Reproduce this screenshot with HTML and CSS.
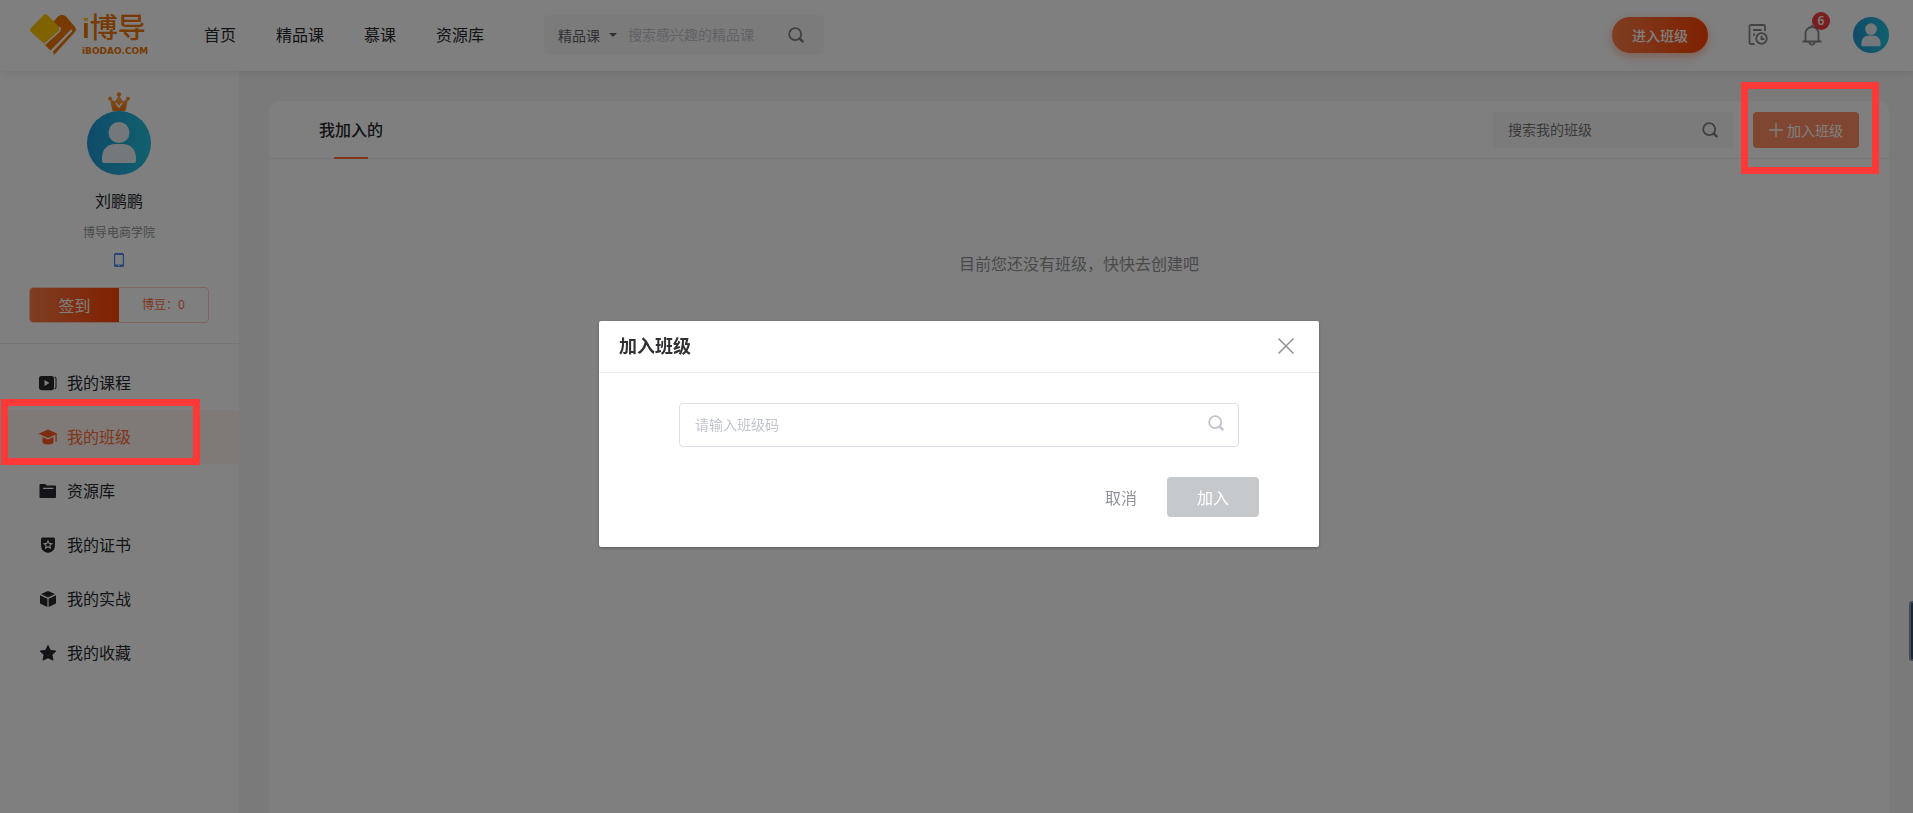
FILE: index.html
```html
<!DOCTYPE html>
<html lang="zh-CN">
<head>
    <meta charset="UTF-8">
    <meta name="viewport" content="width=device-width, initial-scale=1.0">
    <title>我的班级 - i博导</title>
    <link rel="stylesheet" href="styles.css">
</head>
<body>
    <svg class="sprite" aria-hidden="true">
        <symbol id="icon-search" viewBox="0 0 16 16">
            <circle cx="7.2" cy="7.2" r="6" fill="none" stroke="currentColor" stroke-width="1.8"/>
            <path d="M12 12l2.600 2.400" fill="none" stroke="currentColor" stroke-width="2.4" stroke-linecap="round"/>
        </symbol>
        <linearGradient id="avatarFill" x1="0" y1="0" x2="1" y2="0">
            <stop offset="0" stop-color="#2196d3"/>
            <stop offset="1" stop-color="#22c0dc"/>
        </linearGradient>
        <symbol id="icon-avatar" viewBox="0 0 64 64">
            <circle cx="32" cy="32" r="32" fill="url(#avatarFill)"/>
            <circle cx="32" cy="21.500" r="10.500" fill="#e9f1f6"/>
            <path d="M15 50V47C15 38 21 33 28 33h8c7 0 13 5 13 14v3q0 2-3 2H18q-3 0-3-2z" fill="#e9f1f6"/>
        </symbol>
    </svg>

    <header class="header">
        <a class="logo" href="#">
            <svg class="logo-mark" viewBox="0 0 48 42">
                <path d="M19 14L29 2.500q4-3.500 8 0l9 10.500q2 3-.5 5.500L25 41l-1-3.500L43 17.500q1-2-1-2L21.500 36.500 15 30z" fill="#ee7500"/>
                <path d="M1.500 14.500L14 1.500q2.500-2.500 5 0l11.500 12q1.500 2.500-.5 5L16.500 31 1.500 17.500q-1.500-1.500 0-3z" fill="#ffc400"/>
                <path d="M30.500 13q1.500 2.500-.5 4.500L15.500 30.500" fill="none" stroke="#fff" stroke-width="1.500"/>
            </svg>
            <span class="logo-text">
                <span class="logo-name"><span class="logo-i">i</span>博导</span>
                <span class="logo-domain">iBODAO.COM</span>
            </span>
        </a>
        <nav class="nav">
            <a href="#">首页</a>
            <a href="#">精品课</a>
            <a href="#">慕课</a>
            <a href="#">资源库</a>
        </nav>
        <form class="site-search">
            <button type="button" class="search-type">精品课<span class="caret"></span></button>
            <input type="text" aria-label="搜索课程" placeholder="搜索感兴趣的精品课">
            <button type="button" class="icon-btn" aria-label="搜索"><svg class="icon"><use href="#icon-search"/></svg></button>
        </form>
        <div class="header-right">
            <button type="button" class="btn-enter">进入班级</button>
            <a class="header-icon" href="#" aria-label="记录">
                <svg viewBox="0 0 20 22" fill="none" stroke="currentColor" stroke-width="1.800">
                    <path d="M6.500 20H3q-1.500 0-1.500-1.500V2.500Q1.500 1 3 1h12.500Q17 1 17 2.500V7M5 6h8.500M5 10.500h2"/>
                    <circle cx="13.500" cy="14.500" r="5.300"/>
                    <path d="M13.500 11.800v3.200h2.800"/>
                </svg>
            </a>
            <a class="header-icon bell" href="#" aria-label="消息">
                <svg viewBox="0 0 20 22" fill="none" stroke="currentColor" stroke-width="1.800">
                    <path d="M.5 17.500h19M3.500 17.500V9.500a6.500 6.500 0 0 1 13 0v8M7 18.500q3 4.500 6 0M10 1v2"/>
                </svg>
                <span class="badge">6</span>
            </a>
            <a href="#" class="user" aria-label="个人中心"><svg><use href="#icon-avatar"/></svg></a>
        </div>
    </header>

    <div class="page">
        <aside class="sidebar">
            <div class="profile">
                <svg class="crown" viewBox="0 0 22 19">
                    <linearGradient id="crownFill" x1="0" y1="0" x2="0" y2="1">
                        <stop offset="0" stop-color="#ffa64d"/>
                        <stop offset="1" stop-color="#f07a10"/>
                    </linearGradient>
                    <g fill="url(#crownFill)">
                        <path d="M2 7l5 2.500L11 3l4 6.500L20 7l-2 10q-.3 2-2 2H6q-1.700 0-2-2z"/>
                        <circle cx="11" cy="2.200" r="2.200"/>
                        <circle cx="2" cy="6.500" r="2"/>
                        <circle cx="20" cy="6.500" r="2"/>
                    </g>
                    <path d="M8 11l3 4 3-4" fill="none" stroke="#fff" stroke-width="1.500"/>
                </svg>
                <svg class="avatar"><use href="#icon-avatar"/></svg>
                <div class="name">刘鹏鹏</div>
                <div class="school">博导电商学院</div>
                <svg class="phone" viewBox="0 0 10 14">
                    <path d="M1.500 0h7Q10 0 10 1.500v11q0 1.500-1.500 1.500h-7Q0 14 0 12.500v-11Q0 0 1.500 0zM1.200 2v9.500h7.600V2zM4.200 12.200v1h1.600v-1z" fill="#4a86e8" fill-rule="evenodd"/>
                </svg>
                <div class="sign">
                    <button type="button" class="sign-btn">签到</button>
                    <span class="beans">博豆：0</span>
                </div>
            </div>
            <nav class="menu">
                <a class="menu-item" href="#">
                    <svg viewBox="0 0 18 16"><path d="M2.500 1h10Q15 1 15 3v10q0 2-2 2.300H2.500Q0 15 0 13V3Q0 1 2.500 1zM5.500 5v6l5-3zM15.800 1.500q2 .5 1.700 2v9q0 1.500-1.700 2v-1.300q.7-.4.700-1V4q0-.8-.7-1.200z" fill="currentColor" fill-rule="evenodd"/></svg>
                    我的课程
                </a>
                <a class="menu-item active" href="#">
                    <svg viewBox="0 0 18 16"><path d="M9 .5L18.500 4.700 9 9-.5 4.700zM3.500 8L9 10.400 14.500 8v5q0 2.500-5.500 2.500T3.500 13zM16.500 5.500h1.200v7h-1.200z" fill="currentColor"/></svg>
                    我的班级
                    <span class="mark mark-menu"></span>
                </a>
                <a class="menu-item" href="#">
                    <svg viewBox="0 0 18 16"><path d="M1.500 1H6l2 1.500h8q1 0 1 1V14q0 1-1 1H1.500Q.5 15 .5 14V2q0-1 1-1zM4 4.800V6h10.500V4.800z" fill="currentColor" fill-rule="evenodd"/></svg>
                    资源库
                </a>
                <a class="menu-item" href="#">
                    <svg viewBox="0 0 18 16"><path d="M3.500.5h11q1.500 0 1.500 1.500v6q0 5-4 7-3 1.300-6 0-4-2-4-7V2Q2 .5 3.500.5z" fill="currentColor"/><path d="M9 4l1.200 2.400 2.600.3-1.900 1.800.5 2.600L9 9.900l-2.400 1.200.5-2.600-1.900-1.800 2.600-.3z" fill="none" stroke="#fff" stroke-width="1.100"/></svg>
                    我的证书
                </a>
                <a class="menu-item" href="#">
                    <svg viewBox="0 0 18 16"><path d="M9 0l7 3-7 3.500L2 3zM1 4.300l7.400 3.500V16L2 13q-1-.5-1-1.500zM17 4.300L9.600 7.800V16l6.400-3q1-.5 1-1.500z" fill="currentColor"/></svg>
                    我的实战
                </a>
                <a class="menu-item" href="#">
                    <svg viewBox="0 0 18 16"><path d="M9 .5l2.400 4.900 5.400.7-3.900 3.700 1 5.300L9 12.700l-4.900 2.400 1-5.300L1.200 6.100l5.400-.7z" fill="currentColor" stroke="currentColor" stroke-linejoin="round"/></svg>
                    我的收藏
                </a>
            </nav>
        </aside>

        <main class="content">
            <section class="card">
                <div class="card-head">
                    <h2 class="tab">我加入的</h2>
                    <form class="class-search">
                        <input type="text" aria-label="搜索我的班级" placeholder="搜索我的班级">
                        <button type="button" class="icon-btn" aria-label="搜索"><svg class="icon"><use href="#icon-search"/></svg></button>
                    </form>
                    <div class="join">
                        <button type="button" class="btn-join">
                            <svg viewBox="0 0 14 14"><path d="M7 0v14M0 7h14" stroke="currentColor" stroke-width="1.400"/></svg>
                            加入班级
                        </button>
                        <span class="mark mark-join"></span>
                    </div>
                </div>
                <p class="empty">目前您还没有班级，快快去创建吧</p>
            </section>
        </main>
    </div>

    <div class="side-handle"></div>

    <div class="overlay">
        <div class="dialog" role="dialog" aria-labelledby="dialogTitle">
            <div class="dialog-head">
                <h3 id="dialogTitle">加入班级</h3>
                <button type="button" class="close" aria-label="关闭">
                    <svg viewBox="0 0 16 16"><path d="M.5.5l15 15M15.500.5l-15 15" stroke="currentColor" stroke-width="1.500"/></svg>
                </button>
            </div>
            <form class="dialog-body">
                <div class="code-input">
                    <input type="text" aria-label="班级码" placeholder="请输入班级码">
                    <svg class="icon"><use href="#icon-search"/></svg>
                </div>
                <div class="dialog-actions">
                    <button type="button" class="btn-cancel">取消</button>
                    <button type="button" class="btn-submit">加入</button>
                </div>
            </form>
        </div>
    </div>
</body>
</html>
```

FILE: styles.css
```css
* {
    box-sizing: border-box;
}

body {
    margin: 0;
    height: 100vh;
    display: flex;
    flex-direction: column;
    overflow: hidden;
    font-family: "Open Sans", "Noto Sans CJK SC", sans-serif;
    font-size: 16px;
    line-height: 24px;
    color: #24292e;
    background: #f4f4f4;
}

a {
    color: inherit;
    text-decoration: none;
}

button,
input {
    font-family: inherit;
    border: 0;
    padding: 0;
    background: none;
    outline: none;
}

button {
    cursor: pointer;
}

svg {
    display: block;
    overflow: visible;
}

.sprite {
    position: absolute;
    width: 0;
    height: 0;
}

.icon {
    width: 16px;
    height: 16px;
}

.icon-btn {
    color: #7a7e85;
}

/* header */
.header {
    position: relative;
    z-index: 1;
    flex: none;
    display: flex;
    align-items: center;
    height: 71px;
    padding: 0 24px 1px 29px;
    background: #fff;
    box-shadow: 0 2px 10px rgba(0, 0, 0, 0.08);
}

.logo {
    display: flex;
    align-items: center;
    gap: 5px;
    width: 175px;
}

.logo-mark {
    width: 48px;
    height: 42px;
}

.logo-text {
    display: flex;
    flex-direction: column;
    color: #ee7500;
}

.logo-name {
    font-family: "Liberation Sans", "Noto Sans CJK SC", sans-serif;
    font-size: 28px;
    line-height: 32px;
    font-weight: 500;
}

.logo-i {
    font-weight: 700;
    color: transparent;
    background: linear-gradient(#ffc400 10px, #ee7500 10px);
    background-clip: text;
    -webkit-background-clip: text;
}

.logo-domain {
    font-family: "DejaVu Sans", sans-serif;
    font-size: 9px;
    line-height: 12px;
    font-weight: 700;
}

.nav {
    display: flex;
    gap: 40px;
}

.site-search {
    display: flex;
    align-items: center;
    width: 280px;
    height: 40px;
    margin-left: 60px;
    padding: 0 20px 0 14px;
    border-radius: 5px;
    background: #f7f7f7;
    font-size: 14px;
}

.search-type {
    display: flex;
    align-items: center;
    gap: 9px;
    margin-right: 11px;
    font-size: 14px;
    color: #606266;
}

.caret {
    border: 4px solid transparent;
    border-top-color: #606266;
    border-bottom: 0;
}

.site-search input,
.class-search input,
.code-input input {
    flex: 1;
    min-width: 0;
    font-size: 14px;
    line-height: 20px;
}

.site-search input::placeholder,
.code-input input::placeholder {
    color: #c0c4cc;
}

.header-right {
    display: flex;
    align-items: center;
    margin-left: auto;
}

.btn-enter {
    width: 96px;
    height: 36px;
    margin-right: 40px;
    border-radius: 18px;
    background: linear-gradient(90deg, #ff7b44, #ff4200);
    box-shadow: 0 3px 10px rgba(255, 80, 20, 0.4);
    color: #fff;
    font-size: 14px;
    font-weight: 500;
}

.header-icon {
    position: relative;
    margin-right: 34px;
    color: #82868c;
}

.header-icon svg {
    width: 20px;
    height: 22px;
}

.header-icon.bell {
    margin-right: 31px;
}

.badge {
    position: absolute;
    top: -12px;
    left: 10px;
    width: 18px;
    height: 18px;
    border-radius: 9px;
    background: #f03c3c;
    color: #fff;
    font-size: 12px;
    line-height: 18px;
    font-weight: 600;
    text-align: center;
}

.user svg {
    width: 36px;
    height: 36px;
}

/* layout */
.page {
    flex: 1;
    display: flex;
    min-height: 0;
}

.sidebar {
    flex: none;
    width: 239px;
    background: #fff;
}

.profile {
    display: flex;
    flex-direction: column;
    align-items: center;
    padding: 21px 30px 20px 29px;
    border-bottom: 1px solid #ececec;
}

.crown {
    width: 22px;
    height: 19px;
}

.avatar {
    width: 64px;
    height: 64px;
}

.name {
    margin-top: 14px;
}

.school {
    margin-top: 10px;
    font-size: 12px;
    line-height: 20px;
    color: #909399;
}

.phone {
    width: 10px;
    height: 14px;
    margin: 10px 0 20px;
}

.sign {
    display: flex;
    width: 100%;
    height: 36px;
    border: 1px solid #ffccb8;
    border-radius: 4px;
    overflow: hidden;
}

.sign-btn {
    flex: 1;
    font-size: 16px;
    color: #fff;
    background: linear-gradient(90deg, #ff7b44, #ff4200);
}

.beans {
    flex: 1;
    font-size: 12px;
    line-height: 34px;
    text-align: center;
    color: #ff6c37;
}

.menu {
    padding-top: 12px;
}

.menu-item {
    position: relative;
    display: flex;
    align-items: center;
    gap: 10px;
    height: 54px;
    padding-left: 39px;
}

.menu-item svg {
    width: 18px;
    height: 16px;
}

.menu-item.active {
    color: #ff6c37;
    background: #fff4f0;
}

.menu-item.active svg {
    color: #ff5a1f;
}

.content {
    flex: 1;
    display: flex;
    padding: 30px 24px 0 30px;
}

.card {
    flex: 1;
    background: #fff;
    border-radius: 10px 10px 0 0;
}

.card-head {
    display: flex;
    align-items: center;
    height: 58px;
    padding: 0 30px 0 50px;
    border-bottom: 1px solid #ececec;
}

.tab {
    position: relative;
    margin: 0;
    font-size: 16px;
    line-height: 58px;
    font-weight: 500;
}

.tab::after {
    content: "";
    position: absolute;
    left: 15px;
    right: 15px;
    bottom: 0;
    height: 2px;
    background: #ff6c37;
}

.class-search {
    display: flex;
    align-items: center;
    width: 240px;
    height: 36px;
    margin-left: auto;
    padding: 0 15px;
    background: #f7f7f7;
}

.class-search input::placeholder {
    color: #757575;
}

.join {
    position: relative;
    margin-left: 20px;
}

.btn-join {
    display: flex;
    align-items: center;
    justify-content: center;
    gap: 4px;
    width: 106px;
    height: 36px;
    border-radius: 4px;
    background: #ff8f64;
    color: #fff;
    font-size: 14px;
}

.btn-join svg {
    width: 14px;
    height: 14px;
}

.empty {
    margin: 93px 0 0;
    text-align: center;
    color: #909399;
}

/* red frames sit above the overlay */
.mark {
    position: absolute;
    z-index: 20;
    border: 7px solid #ff3838;
    pointer-events: none;
}

.mark-menu {
    top: -11px;
    bottom: -1px;
    left: 1px;
    right: 39px;
}

.mark-join {
    top: -30px;
    bottom: -26px;
    left: -12px;
    right: -20px;
}

.side-handle {
    position: fixed;
    top: 601px;
    right: 0;
    z-index: 20;
    width: 4px;
    height: 60px;
    border: 2px solid #3f4c57;
    border-right: 0;
    border-radius: 3px 0 0 3px;
    background: #1c2733;
}

/* dialog */
.overlay {
    position: fixed;
    inset: 0;
    z-index: 10;
    display: flex;
    justify-content: center;
    align-items: flex-start;
    padding: 321px 0 0 5px;
    background: rgba(0, 0, 0, 0.5);
}

.dialog {
    width: 720px;
    border-radius: 2px;
    background: #fff;
    box-shadow: 0 1px 3px rgba(0, 0, 0, 0.3);
}

.dialog-head {
    display: flex;
    align-items: center;
    justify-content: space-between;
    height: 52px;
    padding: 0 25px 1px 20px;
    border-bottom: 1px solid #ebeef0;
}

.dialog-head h3 {
    margin: 0;
    font-size: 18px;
    font-weight: 700;
    color: #303133;
}

.close {
    color: #909399;
}

.close svg {
    width: 16px;
    height: 16px;
}

.dialog-body {
    padding: 30px 60px 30px 80px;
}

.code-input {
    display: flex;
    align-items: center;
    height: 44px;
    margin-right: 20px;
    padding: 0 14px 0 15px;
    border: 1px solid #dcdfe6;
    border-radius: 4px;
    color: #c0c4cc;
}

.code-input .icon {
    margin-bottom: 4px;
}

.dialog-actions {
    display: flex;
    justify-content: flex-end;
    gap: 30px;
    margin-top: 30px;
}

.btn-cancel {
    font-size: 16px;
    color: #909399;
}

.btn-submit {
    width: 92px;
    height: 40px;
    border-radius: 4px;
    background: #c5c9cc;
    color: #fff;
    font-size: 16px;
}
```
